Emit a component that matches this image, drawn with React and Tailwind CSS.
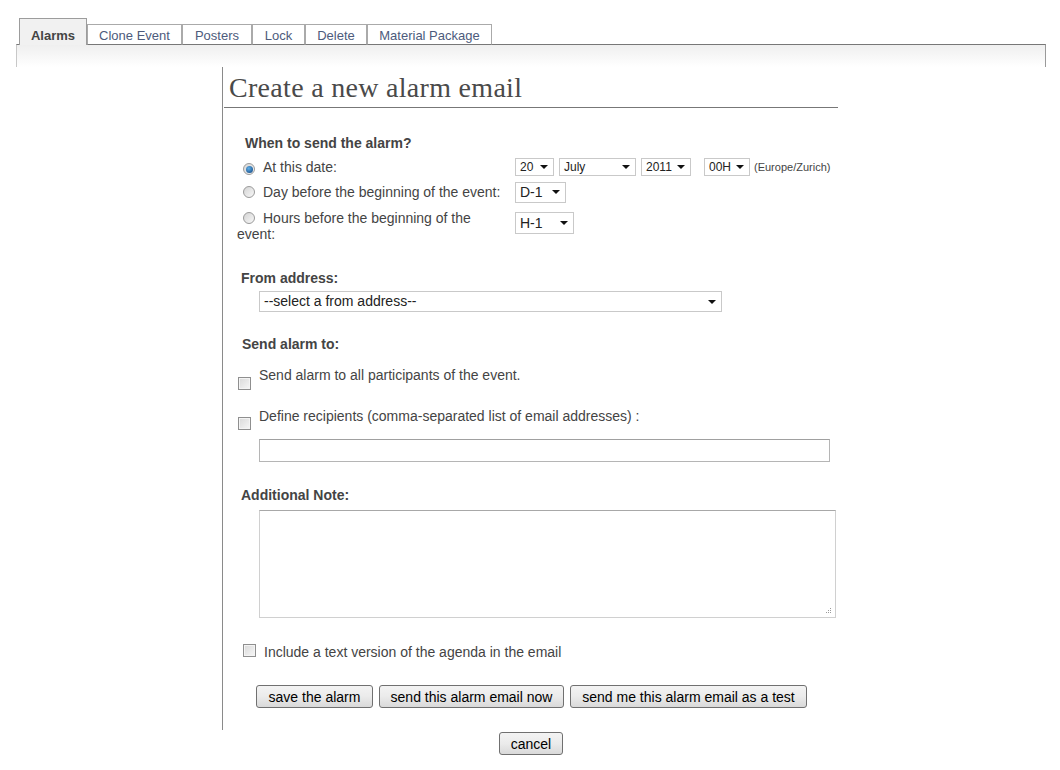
const tabs = [
  { label: "Clone Event", w: "w-[95px]" },
  { label: "Posters", w: "w-[70px]" },
  { label: "Lock", w: "w-[53px]" },
  { label: "Delete", w: "w-[62px]" },
  { label: "Material Package", w: "w-[125px]" },
];

function Arrow() {
  return <span className="h-0 w-0 border-x-[4px] border-t-[4px] border-x-transparent border-t-[#111]" />;
}

// fake select box, the native one looks nothing like the old windows widget
function Select({ className, textClass = "text-[14px]", children }) {
  return (
    <span className={"flex shrink-0 items-center justify-between border border-[#c9c9c9] bg-white pl-[4px] pr-[5px] text-[#222] " + className}>
      <span className={textClass}>{children}</span>
      <Arrow />
    </span>
  );
}

function Radio({ checked }) {
  return (
    <span className="ml-[6px] mr-[8px] inline-flex h-[12px] w-[12px] items-center justify-center rounded-full border border-[#9a9a9a] bg-gradient-to-br from-[#d4d4d4] to-[#f8f8f8] align-[-1px]">
      {checked && <span className="h-[7px] w-[7px] rounded-full bg-[radial-gradient(circle_at_40%_35%,#5fb0ea,#0e3f78)]" />}
    </span>
  );
}

function Checkbox({ className = "" }) {
  return (
    <span className={"block h-[13px] w-[13px] shrink-0 border border-[#8f8f8f] bg-gradient-to-br from-[#d9d9d9] to-[#f7f7f7] shadow-[inset_0_0_0_1px_#f4f4f4] " + className} />
  );
}

function Button({ className, children }) {
  return (
    <button className={"h-[23px] rounded-[3px] border border-[#707070] bg-gradient-to-b from-[#f3f3f3] via-[#ebebeb] to-[#d9d9d9] text-[14px] leading-none text-black " + className}>
      {children}
    </button>
  );
}

export default function App() {
  return (
    <div className="min-h-screen bg-white font-['Liberation_Sans',Arial,sans-serif] text-[14px] text-[#444]">
      {/* Tabs */}
      <div className="pl-[16px] pr-[14px] pt-[18px]">
        <div className="relative z-10 -mb-px flex items-end pl-[3px]">
          <div className="flex h-[27px] w-[68px] items-center justify-center border border-b-0 border-[#9c9c9c] bg-[#f1f1f1] pt-[7px] text-[13px] font-bold text-[#444]">
            Alarms
          </div>
          {tabs.map((t) => (
            <div
              key={t.label}
              className={"flex h-[21px] items-center justify-center border border-[#aaa] border-b-[#777] bg-white pt-[2px] text-[13px] text-[#4d5b7c] " + t.w}
            >
              {t.label}
            </div>
          ))}
        </div>
        <div className="h-[23px] border-x border-t border-[#777] border-l-[#c8c8c8] border-r-[#9a9a9a] bg-gradient-to-b from-[#efefef] to-white" />
      </div>

      {/* Main */}
      <div className="flex">
        <div className="w-[222px] shrink-0" />
        <div className="w-[616px] border-l border-[#8a8a8a] pb-[22px]">
          <h1 className="ml-[1px] border-b border-[#777] pb-[3px] pl-[5px] pt-[5px] font-['Liberation_Serif','Times_New_Roman',serif] text-[28px] font-normal leading-[32px] tracking-[0.3px] text-[#4a4a4a]">
            Create a new alarm email
          </h1>

          <div className="mt-[27px] pl-[22px] font-bold leading-4">When to send the alarm?</div>

          <div className="ml-[14px]">
            <div className="mt-[5px] flex h-[22px] items-center">
              <div className="w-[278px] shrink-0 leading-4">
                <Radio checked />
                At this date:
              </div>
              <Select className="h-[18px] w-[39px]" textClass="text-[12px]">20</Select>
              <Select className="ml-[5px] h-[18px] w-[77px]" textClass="text-[12px]">July</Select>
              <Select className="ml-[5px] h-[18px] w-[50px]" textClass="text-[12px]">2011</Select>
              <Select className="ml-[13px] h-[18px] w-[46px]" textClass="text-[12px]">00H</Select>
              <span className="ml-[4px] text-[11px]">(Europe/Zurich)</span>
            </div>

            <div className="mt-[2px] flex h-[24px] items-center">
              <div className="w-[278px] shrink-0 leading-4">
                <Radio />
                Day before the beginning of the event:
              </div>
              <Select className="h-[21px] w-[51px]">D-1</Select>
            </div>

            <div className="mt-[6px] flex items-start">
              <div className="w-[278px] shrink-0 leading-4">
                <Radio />
                Hours before the beginning of the
                <br />
                event:
              </div>
              <Select className="mt-[2px] h-[22px] w-[59px]">H-1</Select>
            </div>
          </div>

          <div className="mt-[28px] pl-[18px] font-bold leading-4">From address:</div>
          <Select className="ml-[36px] mt-[5px] h-[21px] w-[463px]">--select a from address--</Select>

          <div className="mt-[24px] pl-[19px] font-bold leading-4">Send alarm to:</div>
          <div className="ml-[15px] mt-[15px] flex items-start">
            <Checkbox className="mt-[10px]" />
            <span className="ml-[8px] leading-4">Send alarm to all participants of the event.</span>
          </div>
          <div className="ml-[15px] mt-[18px] flex items-start">
            <Checkbox className="mt-[9px]" />
            <span className="ml-[8px] leading-4">Define recipients (comma-separated list of email addresses) :</span>
          </div>
          <div className="ml-[36px] mt-[9px] h-[23px] w-[571px] border border-[#b5b5b5] border-t-[#a0a0a0]" />

          <div className="mt-[25px] pl-[18px] font-bold leading-4">Additional Note:</div>
          <div className="relative ml-[36px] mt-[7px] h-[108px] w-[577px] border border-[#d0d0d0] border-t-[#a8a8a8]">
            <svg className="absolute bottom-[3px] right-[3px]" width="7" height="7" viewBox="0 0 7 7">
              <rect x="5" y="1" width="1" height="1" fill="#9a9a9a" />
              <rect x="3" y="3" width="1" height="1" fill="#9a9a9a" />
              <rect x="5" y="3" width="1" height="1" fill="#9a9a9a" />
              <rect x="1" y="5" width="1" height="1" fill="#9a9a9a" />
              <rect x="3" y="5" width="1" height="1" fill="#9a9a9a" />
              <rect x="5" y="5" width="1" height="1" fill="#9a9a9a" />
            </svg>
          </div>

          <div className="ml-[20px] mt-[26px] flex items-start">
            <Checkbox />
            <span className="ml-[8px] leading-4">Include a text version of the agenda in the email</span>
          </div>

          <div className="ml-[33px] mt-[25px] flex gap-[6px]">
            <Button className="w-[117px]">save the alarm</Button>
            <Button className="w-[185px]">send this alarm email now</Button>
            <Button className="w-[237px]">send me this alarm email as a test</Button>
          </div>
        </div>
      </div>

      <div className="mt-[2px] flex justify-center pl-[2px]">
        <Button className="w-[64px]">cancel</Button>
      </div>
    </div>
  );
}
